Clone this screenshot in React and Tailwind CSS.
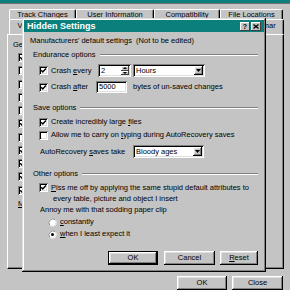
import React from "react";

const RAISED = "shadow-[inset_-1px_-1px_0_#000,inset_1px_1px_0_#fff,inset_-2px_-2px_0_#808080,inset_2px_2px_0_#dfdfdf]";
const WINDOW = "shadow-[inset_-1px_-1px_0_#000,inset_1px_1px_0_#dfdfdf,inset_-2px_-2px_0_#808080,inset_2px_2px_0_#fff]";
const SUNKEN = "shadow-[inset_1px_1px_0_#808080,inset_-1px_-1px_0_#fff,inset_2px_2px_0_#000,inset_-2px_-2px_0_#dfdfdf]";
const TINY = "shadow-[inset_-1px_-1px_0_#404040,inset_1px_1px_0_#fff]";

function Check({ checked }) {
  return (
    <span className={`relative inline-block w-[9px] h-[9px] bg-white shrink-0 ${SUNKEN}`}>
      {checked && (
        <svg className="absolute left-0 top-0" width="9" height="9" viewBox="0 0 9 9">
          <path d="M2.2 4.2 L3.8 5.9 L6.9 2.6" stroke="#000" strokeWidth="1.4" fill="none" />
        </svg>
      )}
    </span>
  );
}

function Radio({ on }) {
  return (
    <svg width="9" height="9" viewBox="0 0 9 9" className="shrink-0">
      <circle cx="4.5" cy="4.5" r="4" fill="#fff" />
      <path d="M1.7 7.3 A4 4 0 0 1 7.3 1.7" stroke="#808080" strokeWidth="1" fill="none" />
      <path d="M7.3 1.7 A4 4 0 0 1 1.7 7.3" stroke="#dfdfdf" strokeWidth="1" fill="none" />
      {on && <circle cx="4.5" cy="4.5" r="1.5" fill="#000" />}
    </svg>
  );
}

function Arrow() {
  return (
    <svg width="5" height="3" viewBox="0 0 5 3">
      <path d="M0 0 H5 L2.5 3 Z" fill="#000" />
    </svg>
  );
}

function Select({ w, value }) {
  return (
    <div className={`flex items-stretch h-[13px] bg-white p-[2px] ${SUNKEN} ${w}`}>
      <span className="flex-1 pl-[1px] leading-[9px]">{value}</span>
      <span className={`w-[9px] bg-[#c4c4c4] flex items-center justify-center ${RAISED}`}>
        <Arrow />
      </span>
    </div>
  );
}

function Group({ label }) {
  return (
    <div className="flex items-center h-[10px] pl-[3px]">
      <span className="leading-[10px] whitespace-nowrap">{label}</span>
      <span className="flex-1 ml-[4px] h-[2px] border-t border-t-[#808080] border-b border-b-white" />
    </div>
  );
}

function Btn({ w, children, def }) {
  return (
    <div
      className={`${w} h-[14px] flex items-center justify-center bg-[#c4c4c4] leading-[10px] ${RAISED} ${
        def ? "border border-black" : ""
      }`}
    >
      {children}
    </div>
  );
}

const TAB = "border-t border-l border-r border-t-white border-l-white border-r-black rounded-t-[2px] shadow-[inset_-1px_0_0_#808080]";

const backChecks = [true, false, false, false, false, true, false, true, true, true, true];

export default function App() {
  return (
    <div className="w-[290px] h-[290px] relative overflow-hidden bg-[#c4c4c4] text-black text-[7.5px] font-['Liberation_Sans',Arial,sans-serif]">
      {/* Back window: Options */}
      <div className="h-[3px] bg-[#0a7f7b]" />
      <div className="h-[1px] bg-[#707070]" />
      <div className="pl-[7px] pr-[6px] pt-[5px]">
        <div className="flex h-[10px] pl-[2px] overflow-hidden">
          <div className={`w-[67px] h-[14px] ${TAB} text-center leading-[9px]`}>Track Changes</div>
          <div className={`w-[78px] h-[14px] ${TAB} text-center leading-[9px]`}>User Information</div>
          <div className={`w-[66px] h-[14px] ${TAB} text-center leading-[9px]`}>Compatibility</div>
          <div className={`w-[63px] h-[14px] ${TAB} text-center leading-[9px]`}>File Locations</div>
        </div>
        <div className="flex justify-between h-[15px] pl-[2px]">
          <div className={`w-[33px] h-[15px] ${TAB} text-center leading-[12px]`}>View</div>
          <div className={`w-[84px] h-[15px] ${TAB} text-center leading-[12px]`}>Spelling &amp; Grammar</div>
        </div>
        <div className="h-[235px] border-t border-l border-r border-b border-t-white border-l-white border-r-black border-b-black shadow-[inset_-1px_-1px_0_#808080] pt-[5px]">
          <div className="h-[10px] leading-[10px] pl-[5px]">General options</div>
          <div className="mt-[3px] flex flex-col pl-[10px]">
            {backChecks.map((c, i) => (
              <div key={i} className="h-[13.25px]">
                <Check checked={c} />
              </div>
            ))}
            <div className="h-[10px] leading-[10px]">
              <u>M</u>easurement units:
            </div>
          </div>
        </div>
        <div className="flex justify-end gap-[5px] mt-[7px] pr-[1px]">
          <Btn w="w-[50px]">OK</Btn>
          <Btn w="w-[51px]">Close</Btn>
        </div>
      </div>

      {/* Front window: Hidden Settings */}
      <div className={`absolute left-[22px] top-[18px] w-[244px] h-[254px] bg-[#c4c4c4] p-[2px] flex flex-col ${WINDOW}`}>
        <div className="h-[12px] bg-[#0a7f7b] flex items-center pl-[3px] pr-[3px]">
          <span className="flex-1 text-white font-bold text-[9px] leading-[12px] whitespace-nowrap">Hidden Settings</span>
          <span className={`w-[10px] h-[9px] bg-[#c4c4c4] flex items-center justify-center font-bold text-[7px] leading-[7px] ${TINY}`}>?</span>
          <span className={`ml-[1px] w-[10px] h-[9px] bg-[#c4c4c4] flex items-center justify-center ${TINY}`}>
            <svg width="6" height="5" viewBox="0 0 6 5">
              <path d="M0.5 0.5 L5.5 4.5 M5.5 0.5 L0.5 4.5" stroke="#000" strokeWidth="1.3" />
            </svg>
          </span>
        </div>
        <div className="flex flex-col pl-[6px] pr-[6px]">
          <div className="mt-[4px] h-[10px] leading-[10px] whitespace-nowrap">
            Manufacturers' default settings&nbsp;&nbsp;(Not to be edited)
          </div>

          <div className="mt-[4px]">
            <Group label="Endurance options" />
          </div>
          <div className="mt-[4px] h-[13px] flex items-center pl-[9px]">
            <Check checked />
            <span className="ml-[3px] w-[47px] whitespace-nowrap">
              Crash <u>e</u>very
            </span>
            <div className={`flex h-[13px] w-[33px] bg-white p-[2px] ${SUNKEN}`}>
              <span className="flex-1 pl-[1px] leading-[9px]">2</span>
              <span className="flex flex-col w-[8px]">
                <span className={`flex-1 bg-[#c4c4c4] flex items-center justify-center ${TINY}`}>
                  <svg width="4" height="2" viewBox="0 0 4 2"><path d="M0 2 H4 L2 0 Z" fill="#000" /></svg>
                </span>
                <span className={`flex-1 bg-[#c4c4c4] flex items-center justify-center ${TINY}`}>
                  <svg width="4" height="2" viewBox="0 0 4 2"><path d="M0 0 H4 L2 2 Z" fill="#000" /></svg>
                </span>
              </span>
            </div>
            <div className="ml-[2px]">
              <Select w="w-[72px]" value="Hours" />
            </div>
          </div>
          <div className="mt-[4px] h-[12px] flex items-center pl-[9px]">
            <Check checked />
            <span className="ml-[3px] w-[45px] whitespace-nowrap">
              Crash <u>a</u>fter
            </span>
            <div className={`h-[12px] w-[31px] bg-white p-[2px] pl-[3px] leading-[8px] ${SUNKEN}`}>5000</div>
            <span className="ml-[6px] whitespace-nowrap">bytes of un-saved changes</span>
          </div>

          <div className="mt-[10px]">
            <Group label="Save options" />
          </div>
          <div className="mt-[4px] h-[10px] flex items-center pl-[9px]">
            <Check checked />
            <span className="ml-[3px] whitespace-nowrap">
              Create incredibly large <u>f</u>iles
            </span>
          </div>
          <div className="mt-[3px] h-[10px] flex items-center pl-[9px]">
            <Check checked={false} />
            <span className="ml-[3px] whitespace-nowrap">
              Allow me to carry on <u>t</u>yping during AutoRecovery saves
            </span>
          </div>
          <div className="mt-[5px] h-[13px] flex items-center pl-[10px]">
            <span className="w-[93px] whitespace-nowrap">
              AutoRecovery <u>s</u>aves take
            </span>
            <Select w="w-[71px]" value="Bloody ages" />
          </div>

          <div className="mt-[11px]">
            <Group label="Other options" />
          </div>
          <div className="mt-[3px] flex items-start pl-[9px]">
            <span className="mt-[1px]">
              <Check checked />
            </span>
            <span className="ml-[3px] leading-[11px]">
              <u>P</u>iss me off by applying the same stupid default attributes to
              <br />
              <span className="pl-[2px]">every table, picture and object I insert</span>
            </span>
          </div>
          <div className="mt-[1px] h-[10px] leading-[10px] pl-[10px] whitespace-nowrap">
            Annoy me with that sodding paper clip
          </div>
          <div className="mt-[2px] h-[10px] flex items-center pl-[18px]">
            <Radio on={false} />
            <span className="ml-[3px]">
              <u>c</u>onstantly
            </span>
          </div>
          <div className="mt-[2px] h-[10px] flex items-center pl-[18px]">
            <Radio on />
            <span className="ml-[3px]">
              <u>w</u>hen I least expect it
            </span>
          </div>

          <div className="mt-[12px] flex justify-end">
            <Btn w="w-[50px]" def>
              OK
            </Btn>
            <div className="ml-[6px]">
              <Btn w="w-[51px]">Cancel</Btn>
            </div>
            <div className="ml-[5px]">
              <Btn w="w-[38px]">
                <u>R</u>eset
              </Btn>
            </div>
          </div>
        </div>
      </div>
    </div>
  );
}
